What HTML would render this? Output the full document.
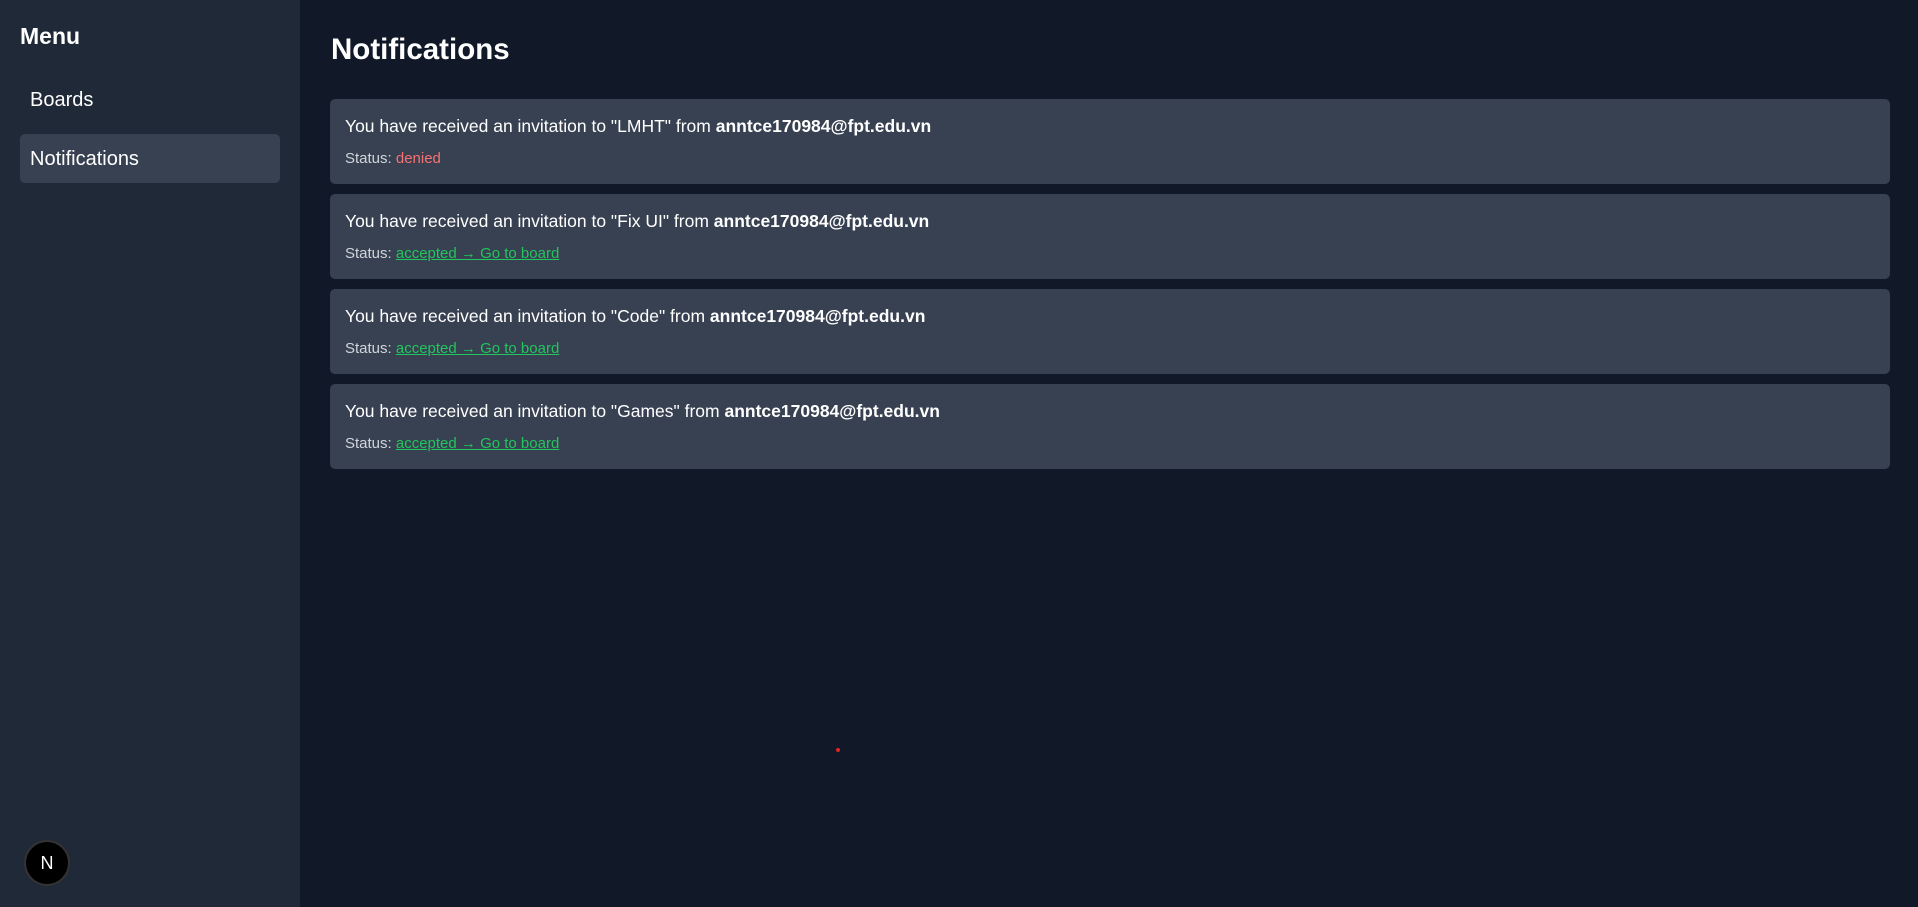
<!DOCTYPE html>
<html><head><meta charset="utf-8"><style>
*{margin:0;padding:0;box-sizing:border-box}
html,body{width:1918px;height:907px;overflow:hidden;background:#111827;font-family:"Liberation Sans",Arial,sans-serif;color:#fff}
.side{position:absolute;left:0;top:0;width:300px;height:907px;background:#1f2937}
.menu{position:absolute;left:20px;top:23px;font-size:23px;font-weight:bold}
.nav{position:absolute;left:20px;width:260px;height:49px;border-radius:5px;font-size:20px;padding-left:10px;line-height:49px}
.nav.a{background:#374151}
h1{position:absolute;left:331px;top:33px;font-size:29.5px;font-weight:bold}
.card{position:absolute;left:330px;width:1560px;height:85px;background:#374151;border-radius:5px;padding-left:15px}
.t{position:absolute;left:15px;top:17px;font-size:17.5px}
.s{position:absolute;left:15px;top:51px;font-size:15px;color:#d1d5db}
.s a{color:#22c55e;text-decoration:underline}
.d{color:#f87171}
.logo{position:absolute;left:24px;top:840px;width:46px;height:46px;border-radius:50%;background:#000;border:2px solid #333;color:#fff;font-size:18px;text-align:center;line-height:42px}
</style></head><body>
<div class="side">
<div class="menu">Menu</div>
<div class="nav" style="top:76px">Boards</div>
<div class="nav a" style="top:134px;line-height:51px">Notifications</div>
<div class="logo">N</div>
</div>
<h1>Notifications</h1>
<div class="card" style="top:99px"><div class="t">You have received an invitation to "LMHT" from <b>anntce170984@fpt.edu.vn</b></div><div class="s">Status: <span class="d">denied</span></div></div>
<div class="card" style="top:194px"><div class="t">You have received an invitation to "Fix UI" from <b>anntce170984@fpt.edu.vn</b></div><div class="s">Status: <a>accepted → Go to board</a></div></div>
<div class="card" style="top:289px"><div class="t">You have received an invitation to "Code" from <b>anntce170984@fpt.edu.vn</b></div><div class="s">Status: <a>accepted → Go to board</a></div></div>
<div class="card" style="top:384px"><div class="t">You have received an invitation to "Games" from <b>anntce170984@fpt.edu.vn</b></div><div class="s">Status: <a>accepted → Go to board</a></div></div>
<div style="position:absolute;left:836px;top:748px;width:4px;height:4px;border-radius:50%;background:#dc2626"></div>
</body></html>
